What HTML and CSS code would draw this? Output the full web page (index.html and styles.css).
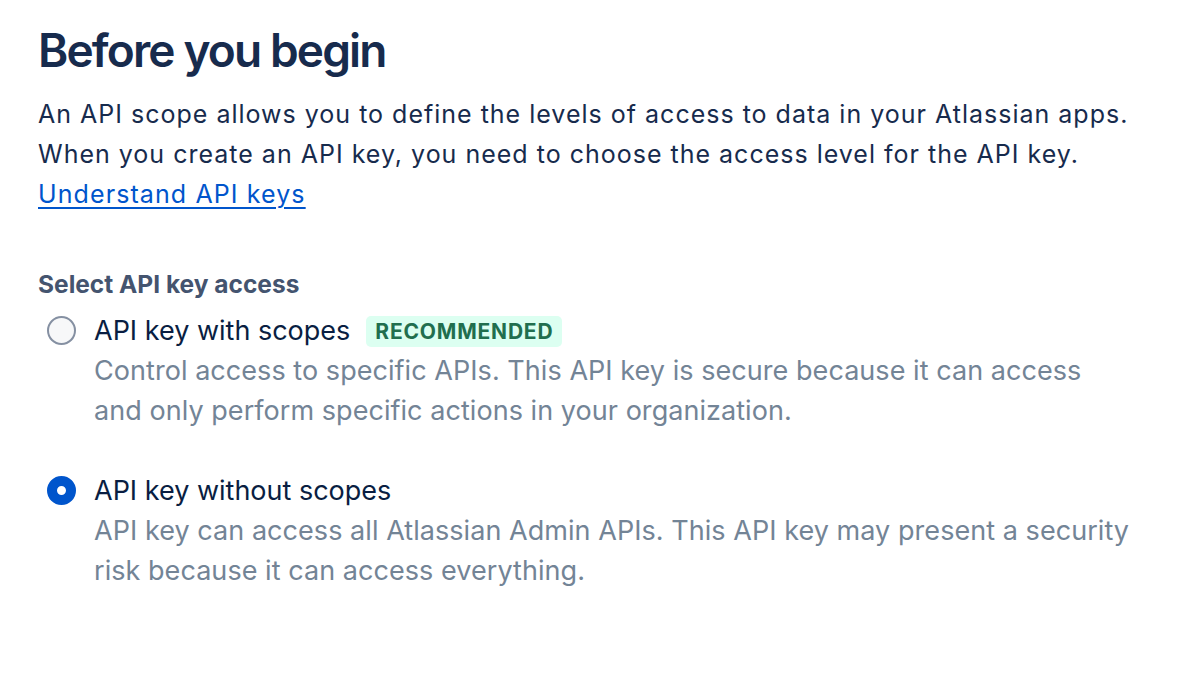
FILE: index.html
```html
<!DOCTYPE html>
<html lang="en">
<head>
<meta charset="utf-8">
<title>Before you begin</title>
<link rel="stylesheet" href="styles.css">
</head>
<body>
<main class="page">
  <h1 class="title">Before you begin</h1>
  <p class="intro">An API scope allows you to define the levels of access to data in your Atlassian apps. When you create an API key, you need to choose the access level for the API key.<br><a class="link" href="#">Understand API keys</a></p>

  <div class="group" role="radiogroup" aria-labelledby="grp-label">
    <div class="group-label" id="grp-label">Select API key access</div>

    <div class="options">
      <label class="option">
        <span class="radio"></span>
        <span class="option-body">
          <span class="option-title">API key with scopes <span class="badge">Recommended</span></span>
          <span class="option-desc">Control access to specific APIs. This API key is secure because it can access and only perform specific actions in your organization.</span>
        </span>
      </label>

      <label class="option">
        <span class="radio radio-checked"></span>
        <span class="option-body">
          <span class="option-title">API key without scopes</span>
          <span class="option-desc">API key can access all Atlassian Admin APIs. This API key may present a security risk because it can access everything.</span>
        </span>
      </label>
    </div>
  </div>
</main>
</body>
</html>
```
FILE: styles.css
```css
* { box-sizing: border-box; }
html, body { margin: 0; padding: 0; background: #ffffff; }
body {
  font-family: Inter, "Open Sans", "Liberation Sans", sans-serif;
  color: #172B4D;
}
.page {
  padding: 22px 38px 0 38px;
  width: 1192px;
}
.title {
  margin: 0;
  font-size: 46px;
  line-height: 56px;
  font-weight: 600;
  letter-spacing: -1.85px;
  color: #172B4D;
}
.intro {
  margin: 16px 0 0 0;
  font-size: 25px;
  line-height: 40px;
  width: 1120px;
  letter-spacing: 1px;
}
.link {
  color: #0055CC;
  text-decoration: underline;
  text-underline-offset: 4px;
  text-decoration-thickness: 1.5px;
  letter-spacing: 1.1px;
}
.group {
  margin-top: 54px;
  display: flex;
  flex-direction: column;
  gap: 11px;
}
.group-label {
  font-size: 24.5px;
  line-height: 32px;
  font-weight: 700;
  color: #44546F;
}
.options {
  display: flex;
  flex-direction: column;
  gap: 40px;
}
.option {
  display: flex;
  gap: 18px;
  align-items: flex-start;
  padding-left: 9px;
}
.radio {
  flex: none;
  width: 29px;
  height: 29px;
  border-radius: 50%;
  border: 2px solid #8590A2;
  background: #F7F8F9;
  margin-top: 5px;
}
.radio-checked {
  border: 10.5px solid #0055CC;
  background: #ffffff;
}
.option-body { display: flex; flex-direction: column; }
.option-title {
  font-size: 27px;
  line-height: 40px;
  color: #091E42;
  display: flex;
  align-items: center;
  gap: 16px;
}
.badge {
  display: inline-block;
  background: #DCFFF1;
  color: #216E4E;
  font-size: 21px;
  font-weight: 700;
  text-transform: uppercase;
  line-height: 31px;
  padding: 0 9px;
  border-radius: 5px;
  letter-spacing: 0.8px;
}
.option-desc {
  font-size: 27px;
  line-height: 40px;
  color: #738496;
  width: 1036px;
  letter-spacing: 0.05px;
}
```
